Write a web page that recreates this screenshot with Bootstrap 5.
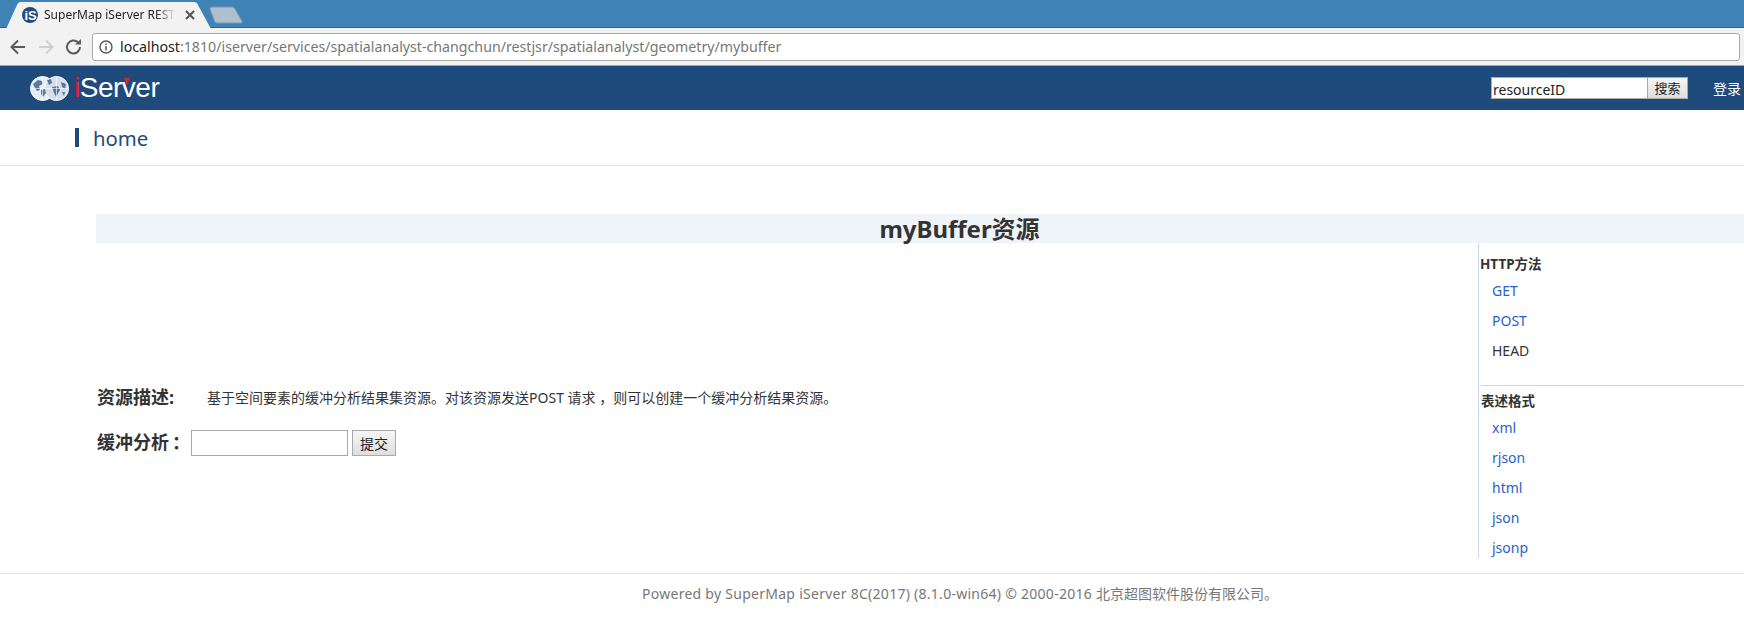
<!DOCTYPE html>
<html lang="zh">
<head>
  <meta charset="UTF-8">
  <title>myBuffer资源</title>
  <link href="https://cdn.jsdelivr.net/npm/bootstrap@5.3.0/dist/css/bootstrap.min.css" rel="stylesheet">
  <style>
    html, body { height: 624px; overflow: hidden; }
    body { font-family: "Noto Sans", "Noto Sans CJK SC", sans-serif; font-size: 14px; color: #333; background: #fff; }
    a { text-decoration: none; color: #2a62c9; }
    .mid-punct { font-family: "Noto Sans CJK TC", sans-serif; }
    .colon-shift { margin-left: 3px; margin-right: -3px; }

    .tabstrip { height: 28px; background: #3e82b6; border-bottom: 1px solid #2c6490; position: relative; }
    .tab-shape { position: absolute; left: 0; top: 0; }
    .tab-label { position: absolute; left: 44px; top: 6px; width: 132px; font-size: 12px; line-height: 18px; color: #222; white-space: nowrap; overflow: hidden;
      -webkit-mask-image: linear-gradient(to right, #000 85%, transparent 100%); mask-image: linear-gradient(to right, #000 85%, transparent 100%); }
    .toolbar-strip { height: 38px; background: #f2f2f2; border-bottom: 1px solid #a6a6a6; padding: 5px 4px 4px 8px; }
    .nav-ico { width: 20px; height: 20px; flex: none; }
    .urlbox { height: 28px; margin-left: 8px; flex: 1; background: #fff; border: 1px solid #a9a9a9; border-radius: 3px; padding-left: 6px; font-size: 14.2px; line-height: 26px; color: #777; }
    .urlbox b { font-weight: 400; color: #222; }
    .url-ico { margin-right: 7px; }

    .topbar { height: 44px; background: #1f4a7c; padding-left: 30px; padding-right: 3px; }
    .brand-word { font-family: "Liberation Sans", sans-serif; font-size: 28px; letter-spacing: -.5px; color: #fff; line-height: 44px; margin-left: 5px; position: relative; }
    .brand-word i { font-style: normal; color: #e3202c; }
    .brand-tick { position: absolute; left: 50px; top: 12px; border: 3.5px solid transparent; border-top: 7px solid #e3202c; border-bottom: 0; }
    .search-in { width: 156px; height: 22px; border: 1px solid #a9a9a9; border-right: 0; padding: 2px 1px 0; font-size: 14px; line-height: 20px; background: #fff; color: #222; overflow: hidden; }
    .search-btn { width: 41px; height: 22px; border: 1px solid #a9a9a9; background: linear-gradient(#f6f6f6, #dedede); padding: 0; font-size: 13px; line-height: 18px; color: #222; }
    .login-link { color: #fff; margin-left: 25px; font-size: 14px; }

    .crumb { height: 56px; border-bottom: 1px solid #e3e3e3; padding: 18px 0 0 75px; }
    .crumb-text { border-left: 4px solid #1f4a7c; height: 19px; padding-left: 14px; padding-top: 1px; font-size: 20.300px; line-height: 19px; color: #1f4a7c; }

    .page-body { height: 408px; padding: 48px 0 0 96px; border-bottom: 1px solid #e3e3e3; }
    .title-band { height: 29px; background: #eff3fa; text-align: center; padding-left: 79px; font-size: 24px; font-weight: 700; line-height: 29px; color: #333; }
    .main-left { padding: 140px 0 0 1px; }
    .field-name { font-size: 18px; font-weight: 700; line-height: 28px; color: #333; white-space: nowrap; flex: none; }
    .desc-row { height: 28px; }
    .desc-text { margin-left: 33px; font-size: 14px; line-height: 28px; }
    .form-line { margin-top: 19px; height: 26px; }
    .form-line .field-name { padding-bottom: 3px; }
    .buf-input { width: 157px; height: 26px; margin-left: 4px; border: 1px solid #a9a9a9; background: #fff; }
    .buf-btn { width: 44px; height: 26px; margin-left: 4px; border: 1px solid #a9a9a9; background: linear-gradient(#f6f6f6, #dedede); padding: 0; font-size: 14px; color: #222; }
    .side-col { width: 266px; height: 315px; border-left: 1px solid #c6d5f0; padding-left: 1px; }
    .side-head { font-size: 13.5px; font-weight: 700; line-height: 20px; color: #333; }
    .side-list { list-style: none; margin: 2px 0 0; padding: 0 0 0 12px; }
    .side-list li { height: 30px; line-height: 30px; font-size: 14px; }
    .side-first { padding-top: 11px; }
    .side-rule { margin: 19px 0 0 1px; border-top: 1px solid #c6d5f0; padding-top: 5px; }
    .foot-text { padding: 10px 0 0 642px; color: #777; font-size: 14px; line-height: 20px; letter-spacing: .27px; }
    .foot-cjk { font-size: 14px; letter-spacing: 0; }
  </style>
</head>
<body>
  <!-- barra del navegador -->
  <div class="tabstrip">
    <svg class="tab-shape" width="250" height="29" viewBox="0 0 250 29">
      <path d="M6 29 L17 5 Q18 2 21 2 L194 2 Q197 2 198 5 L211 29 Z" fill="#f2f2f2"/>
      <path d="M210 9 Q209.500 7 212 7 L232 7 Q234 7 235 9 L242 21 Q243 23 241 23 L217 23 Q215 23 214.500 21 Z" fill="#aebfcf" stroke="#7d97ae"/>
      <circle cx="30" cy="15" r="8" fill="#1f4a7c"/>
      <text x="24.500" y="20" font-size="13" font-weight="700" fill="#fff" font-family="Liberation Sans">iS</text>
      <path d="M186 11 L194 19 M194 11 L186 19" stroke="#555" stroke-width="2"/>
    </svg>
    <span class="tab-label">SuperMap iServer REST</span>
  </div>
  <div class="toolbar-strip d-flex align-items-center">
    <svg class="nav-ico" viewBox="0 0 20 20"><path d="M17 10 H4 M10 3.500 L3.500 10 L10 16.500" fill="none" stroke="#5a5a5a" stroke-width="2"/></svg>
    <svg class="nav-ico ms-2" viewBox="0 0 20 20"><path d="M3 10 H16 M10 3.500 L16.500 10 L10 16.500" fill="none" stroke="#cfcfcf" stroke-width="2"/></svg>
    <svg class="nav-ico ms-2" viewBox="0 0 20 20"><path d="M16 10 A6.500 6.500 0 1 1 14 5.300" fill="none" stroke="#5a5a5a" stroke-width="2"/><path d="M11 7.500 H17 V2 Z" fill="#5a5a5a"/></svg>
    <div class="urlbox d-flex align-items-center">
      <svg width="14" height="14" viewBox="0 0 14 14" class="url-ico flex-shrink-0"><circle cx="7" cy="7" r="6" fill="none" stroke="#555" stroke-width="1.400"/><path d="M7 6 V10.500 M7 3.500 V5" stroke="#555" stroke-width="1.500"/></svg>
      <span><b>localhost</b>:1810/iserver/services/spatialanalyst-changchun/restjsr/spatialanalyst/geometry/mybuffer</span>
    </div>
  </div>

  <!-- cabecera -->
  <div class="topbar d-flex align-items-center">
    <svg width="39" height="25" viewBox="0 0 39 25">
      <circle cx="12.500" cy="12.500" r="12" fill="#e4ebf3" stroke="#fff"/>
      <circle cx="26.500" cy="12.500" r="12" fill="#d5dfeb" stroke="#fff"/>
      <path d="M3 8 L8 4 L12 5 L13 8 L9 10 L10 14 L7 15 L5 12 Z M11 14 L15 13 L16 17 L13 21 L11 18 Z M17 4 L21 3 L22 7 L19 9 Z M22 11 L28 10 L30 14 L26 21 L24 17 Z M31 6 L36 8 L35 13 L32 11 Z M32 16 L35 16 L34 20 Z" fill="#1f4a7c" opacity=".7"/>
      <path d="M1 12.500 H38 M12.500 1 V24 M26.500 1 V24" stroke="#fff" stroke-width=".6" fill="none"/>
    </svg>
    <span class="brand-word"><i>i</i>Server<span class="brand-tick"></span></span>
    <div class="ms-auto d-flex align-items-center">
      <div class="search-in">resourceID</div>
      <button class="search-btn" type="button">搜索</button>
      <a class="login-link" href="#">登录</a>
    </div>
  </div>

  <div class="crumb"><div class="crumb-text">home</div></div>

  <div class="page-body">
    <div class="title-band">myBuffer资源</div>
    <div class="d-flex">
      <div class="main-left flex-grow-1">
        <div class="desc-row d-flex">
          <span class="field-name">资源描述:</span>
          <span class="desc-text">基于空间要素的缓冲分析结果集资源。对该资源发送POST 请求 <span class="mid-punct">，</span>则可以创建一个缓冲分析结果资源。</span>
        </div>
        <div class="form-line d-flex align-items-center">
          <span class="field-name">缓冲分析<span class="mid-punct colon-shift">：</span></span>
          <input class="buf-input" type="text">
          <button class="buf-btn" type="button">提交</button>
        </div>
      </div>
      <div class="side-col">
        <div class="side-first side-head">HTTP方法</div>
        <ul class="side-list">
          <li><a href="#">GET</a></li>
          <li><a href="#">POST</a></li>
          <li>HEAD</li>
        </ul>
        <div class="side-rule side-head">表述格式</div>
        <ul class="side-list">
          <li><a href="#">xml</a></li>
          <li><a href="#">rjson</a></li>
          <li><a href="#">html</a></li>
          <li><a href="#">json</a></li>
          <li><a href="#">jsonp</a></li>
        </ul>
      </div>
    </div>
  </div>
  <div class="foot-text">Powered by SuperMap iServer 8C(2017) (8.1.0-win64) © 2000-2016 <span class="foot-cjk">北京超图软件股份有限公司。</span></div>

  <script src="https://cdn.jsdelivr.net/npm/bootstrap@5.3.0/dist/js/bootstrap.bundle.min.js"></script>
</body>
</html>
